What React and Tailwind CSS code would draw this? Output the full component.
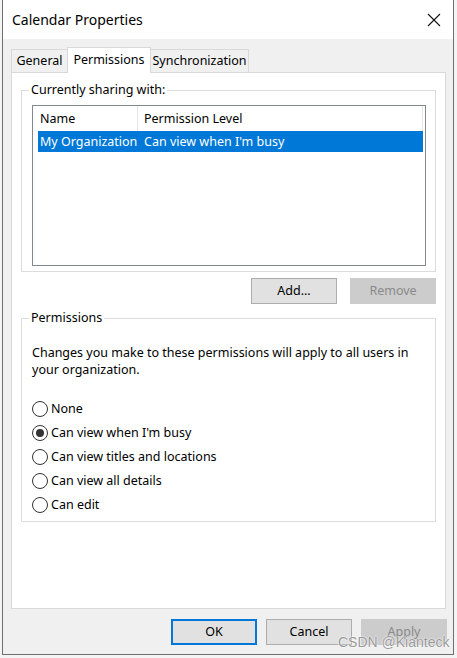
import React from "react";

const font = { fontFamily: '"Noto Sans", "Segoe UI", sans-serif' };

function Radio({ checked, label }) {
  return (
    <div className="flex items-center h-[24px]">
      <div className="w-[16px] h-[16px] rounded-full border border-[#333333] bg-white flex items-center justify-center shrink-0">
        {checked && <div className="w-[8px] h-[8px] rounded-full bg-[#333333]" />}
      </div>
      <span className="ml-[3px] text-[12.5px] text-black leading-none">{label}</span>
    </div>
  );
}

export default function App() {
  return (
    <div className="w-[457px] h-[658px] bg-[#f4f4f4] relative overflow-hidden" style={font}>
      <div className="absolute left-[2px] top-0 w-[452px] h-[655px] border border-[#6f6f6f] border-t-0 bg-[#f0f0f0] flex flex-col">
        {/* Title bar */}
        <div className="h-[39px] bg-white flex items-center justify-between pl-[9px] pr-[12px] shrink-0">
          <span className="text-[14px] text-black leading-none">Calendar Properties</span>
          <svg width="14" height="14" viewBox="0 0 14 14">
            <path d="M1 1 L13 13 M13 1 L1 13" stroke="#111" strokeWidth="1.1" />
          </svg>
        </div>

        {/* Tabs */}
        <div className="flex items-end h-[25px] mt-[8px] pl-[8px] shrink-0">
          <div className="h-[23px] border border-b-0 border-[#d9d9d9] bg-[#f0f0f0] flex items-center text-[12.5px] text-black w-[57px] justify-center -mr-px">
            General
          </div>
          <div className="h-[26px] -mb-px relative z-10 border border-b-0 border-[#d9d9d9] bg-white flex items-start pt-[3px] text-[12.5px] text-black w-[84px] justify-center">
            Permissions
          </div>
          <div className="h-[23px] border border-b-0 border-[#d9d9d9] bg-[#f0f0f0] flex items-center text-[12.5px] text-black w-[99px] justify-center -ml-px">
            Synchronization
          </div>
        </div>

        {/* Panel */}
        <div className="ml-[8px] w-[435px] h-[537px] border border-[#d9d9d9] bg-white pt-[17px] pl-[9px] shrink-0">
          {/* Group 1 */}
          <div className="relative w-[415px] h-[182px] border border-[#dcdcdc] pt-[14px] pl-[10px]">
            <span className="absolute left-[7px] -top-[9px] bg-white px-[2px] text-[12.5px] leading-[16px] text-black">
              Currently sharing with:
            </span>
            <div className="w-[394px] h-[161px] border border-[#828790] bg-white">
              <div className="flex h-[25px] items-center text-[12.5px] text-black">
                <div className="w-[105px] h-full flex items-center pl-[7px] pt-[2px] border-r border-[#e5e5e5]">Name</div>
                <div className="w-[285px] h-full flex items-center pl-[6px] pt-[2px] border-r border-[#e5e5e5]">Permission Level</div>
              </div>
              <div className="ml-[5px] w-[385px] h-[21px] pt-[1px] bg-[#0078d7] flex items-center text-[12.5px] text-white">
                <div className="w-[100px] pl-[2px] whitespace-nowrap overflow-hidden">My Organization</div>
                <div className="pl-[6px]">Can view when I'm busy</div>
              </div>
            </div>
          </div>

          {/* Buttons */}
          <div className="w-[415px] flex justify-end gap-[13px] mt-[6px]">
            <div className="w-[86px] h-[26px] bg-[#e1e1e1] border border-[#adadad] flex items-center justify-center text-[12.5px] text-black">
              Add...
            </div>
            <div className="w-[86px] h-[26px] bg-[#cccccc] border border-[#cccccc] flex items-center justify-center text-[12.5px] text-[#8a8a8a]">
              Remove
            </div>
          </div>

          {/* Group 2 */}
          <div className="relative w-[415px] h-[204px] border border-[#dcdcdc] mt-[14px] pl-[10px] pt-[25px]">
            <span className="absolute left-[7px] -top-[9px] bg-white px-[2px] text-[12.5px] leading-[16px] text-black">
              Permissions
            </span>
            <p className="text-[12.5px] leading-[17px] text-black w-[395px]">
              Changes you make to these permissions will apply to all users in your organization.
            </p>
            <div className="mt-[19px] flex flex-col">
              <Radio label="None" />
              <Radio checked label="Can view when I'm busy" />
              <Radio label="Can view titles and locations" />
              <Radio label="Can view all details" />
              <Radio label="Can edit" />
            </div>
          </div>
        </div>

        {/* Bottom buttons */}
        <div className="flex justify-end gap-[9px] pr-[6px] mt-[10px]">
          <div className="w-[86px] h-[26px] bg-[#e1e1e1] border-2 border-[#0078d7] flex items-center justify-center text-[12.5px] text-black">
            OK
          </div>
          <div className="w-[86px] h-[26px] bg-[#e1e1e1] border border-[#adadad] flex items-center justify-center text-[12.5px] text-black">
            Cancel
          </div>
          <div className="w-[86px] h-[26px] bg-[#cccccc] border border-[#cccccc] flex items-center justify-center text-[12.5px] text-[#8a8a8a]">
            Apply
          </div>
        </div>
      </div>

      {/* Watermark */}
      <div
        className="absolute left-[338px] top-[635px] text-[14px] leading-none text-[#9a9a9a]"
        style={{ fontFamily: '"Liberation Sans", Arial, sans-serif', textShadow: "0 0 2px #fff, 0 0 1px #fff" }}
      >
        CSDN @Kianteck
      </div>
    </div>
  );
}
